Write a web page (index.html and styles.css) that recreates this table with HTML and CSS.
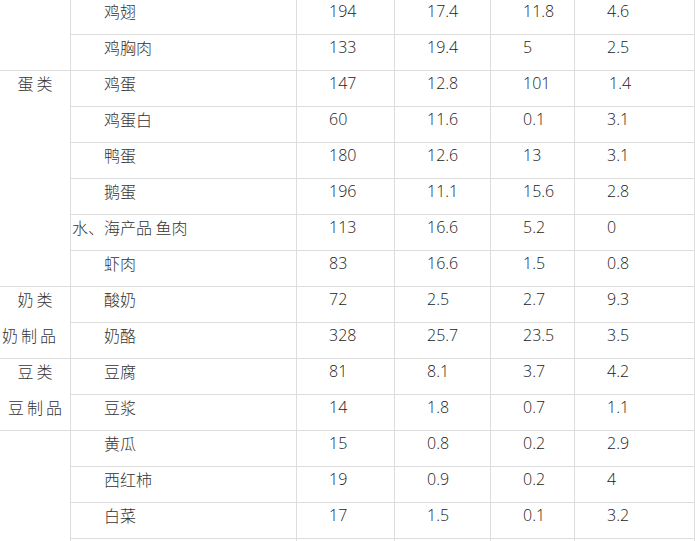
FILE: index.html
```html
<!DOCTYPE html>
<html lang="zh">
<head>
<meta charset="utf-8">
<title>食物营养成分表</title>
<link rel="stylesheet" href="styles.css">
</head>
<body>
<table class="nutri">
  <colgroup>
    <col class="c1"><col class="c2"><col class="c3"><col class="c4"><col class="c5"><col class="c6">
  </colgroup>
  <tbody>
    <tr><td class="group" rowspan="2"></td><td class="name">鸡翅</td><td>194</td><td>17.4</td><td>11.8</td><td>4.6</td></tr>
    <tr><td class="name">鸡胸肉</td><td>133</td><td>19.4</td><td>5</td><td>2.5</td></tr>
    <tr><td class="group" rowspan="6"><div class="label">蛋类</div></td><td class="name">鸡蛋</td><td>147</td><td>12.8</td><td>101</td><td class="pad-more">1.4</td></tr>
    <tr><td class="name">鸡蛋白</td><td>60</td><td>11.6</td><td>0.1</td><td>3.1</td></tr>
    <tr><td class="name">鸭蛋</td><td>180</td><td>12.6</td><td>13</td><td>3.1</td></tr>
    <tr><td class="name">鹅蛋</td><td>196</td><td>11.1</td><td>15.6</td><td>2.8</td></tr>
    <tr><td class="name hang">水、海产品 鱼肉</td><td>113</td><td>16.6</td><td>5.2</td><td>0</td></tr>
    <tr><td class="name">虾肉</td><td>83</td><td>16.6</td><td>1.5</td><td>0.8</td></tr>
    <tr><td class="group" rowspan="2"><div class="label">奶类</div><div class="label last shift-left">奶制品</div></td><td class="name">酸奶</td><td>72</td><td>2.5</td><td>2.7</td><td>9.3</td></tr>
    <tr><td class="name">奶酪</td><td>328</td><td>25.7</td><td>23.5</td><td>3.5</td></tr>
    <tr><td class="group" rowspan="2"><div class="label">豆类</div><div class="label last">豆制品</div></td><td class="name">豆腐</td><td>81</td><td>8.1</td><td>3.7</td><td>4.2</td></tr>
    <tr><td class="name">豆浆</td><td>14</td><td>1.8</td><td>0.7</td><td>1.1</td></tr>
    <tr><td class="group" rowspan="4"></td><td class="name">黄瓜</td><td>15</td><td>0.8</td><td>0.2</td><td>2.9</td></tr>
    <tr><td class="name">西红柿</td><td>19</td><td>0.9</td><td>0.2</td><td>4</td></tr>
    <tr><td class="name">白菜</td><td>17</td><td>1.5</td><td>0.1</td><td>3.2</td></tr>
    <tr class="tail"><td class="name"></td><td></td><td></td><td></td><td></td></tr>
  </tbody>
</table>
</body>
</html>
```
FILE: styles.css
```css
html, body {
  margin: 0;
  padding: 0;
  background: #ffffff;
}

body {
  font-family: "Open Sans", "Noto Sans CJK SC", sans-serif;
  font-size: 16px;
  color: #333333;
  overflow: hidden;
}

.nutri {
  border-collapse: separate;
  border-spacing: 0;
  table-layout: fixed;
  width: 695px;
  margin-top: -1px;
}

.c1 { width: 71px; }
.c2 { width: 226px; }
.c3 { width: 98px; }
.c4 { width: 96px; }
.c5 { width: 84px; }
.c6 { width: 120px; }

.nutri td {
  box-sizing: border-box;
  height: 36px;
  padding: 0 0 0 32px;
  vertical-align: top;
  line-height: 24px;
  border-right: 1px solid #dddddd;
  border-bottom: 1px solid #dddddd;
  white-space: nowrap;
  font-family: "Open Sans", "Noto Sans CJK SC", sans-serif;
  font-weight: 300;
  color: #222222;
}

.nutri td.name {
  padding-left: 33px;
  font-family: "Noto Sans CJK SC", sans-serif;
  font-weight: 300;
  color: #333333;
}

.nutri td.hang {
  text-indent: -32px;
}

.nutri td.pad-more {
  padding-left: 34px;
}

.nutri td.group {
  padding: 0;
  font-family: "Noto Sans CJK SC", sans-serif;
  font-weight: 300;
  color: #333333;
}

.label {
  height: 36px;
  line-height: 24px;
  text-align: center;
  letter-spacing: 3px;
  padding-left: 3px;
}

.label.last {
  height: 35px;
}

.shift-left {
  text-align: left;
  padding-left: 2px;
}
```
